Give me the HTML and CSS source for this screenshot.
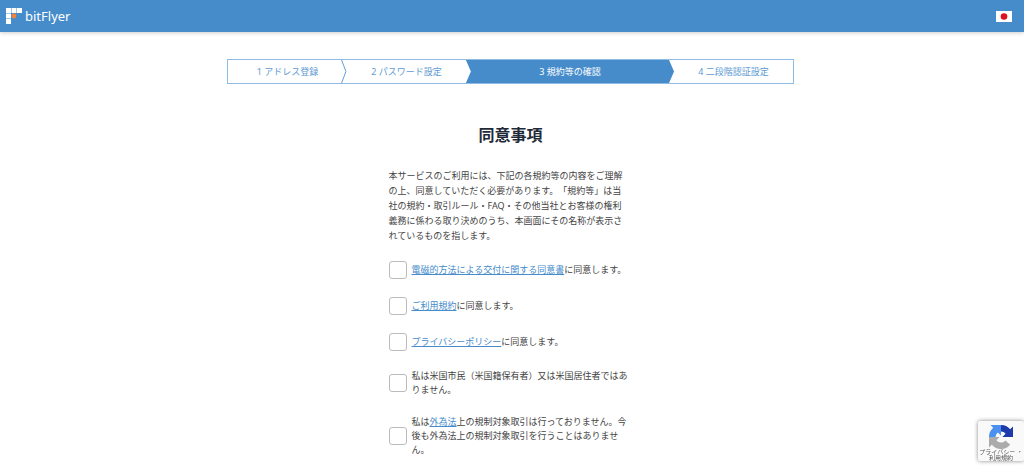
FILE: index.html
```html
<!DOCTYPE html>
<html lang="ja">
<head>
    <meta charset="UTF-8">
    <meta name="viewport" content="width=device-width, initial-scale=1.0">
    <title>同意事項 - bitFlyer</title>
    <link rel="stylesheet" href="styles.css">
</head>
<body>
    <header class="header">
        <a class="logo" href="#">
            <svg class="logo-mark" viewBox="0 0 16 16" aria-hidden="true">
                <g fill="#fff">
                    <rect x="0" y="0" width="5" height="5"/>
                    <rect x="5.5" y="0" width="5" height="5"/>
                    <rect x="11" y="0" width="5" height="5"/>
                    <rect x="0" y="5.5" width="5" height="5"/>
                    <rect x="0" y="11" width="5" height="5"/>
                </g>
                <circle cx="8" cy="8" r="2.4" fill="#f58233"/>
            </svg>
            <span>bitFlyer</span>
        </a>
        <button type="button" class="lang" aria-label="日本語">
            <svg class="flag" viewBox="0 0 16 11" aria-hidden="true">
                <rect width="16" height="11" fill="#fff"/>
                <circle cx="8" cy="5.5" r="3.3" fill="#e0101c"/>
            </svg>
        </button>
    </header>

    <main class="main">
        <ol class="steps">
            <li class="step">1 アドレス登録
                <svg class="chevron" viewBox="0 0 6 24" aria-hidden="true">
                    <path d="M0.5 0L5 12L0.5 24" fill="none" stroke="#5d9ad3"/>
                </svg>
            </li>
            <li class="step">2 パスワード設定</li>
            <li class="step active">3 規約等の確認</li>
            <li class="step">4 二段階認証設定</li>
        </ol>

        <form class="terms">
            <h1>同意事項</h1>
            <p class="lead">本サービスのご利用には、下記の各規約等の内容をご理解の上、同意していただく必要があります。「規約等」は当社の規約・取引ルール・FAQ・その他当社とお客様の権利義務に係わる取り決めのうち、本画面にその名称が表示されているものを指します。</p>
            <div class="checks">
                <div class="check">
                    <input type="checkbox" id="agree1">
                    <label for="agree1"><a href="#">電磁的方法による交付に関する同意書</a>に同意します。</label>
                </div>
                <div class="check">
                    <input type="checkbox" id="agree2">
                    <label for="agree2"><a href="#">ご利用規約</a>に同意します。</label>
                </div>
                <div class="check">
                    <input type="checkbox" id="agree3">
                    <label for="agree3"><a href="#">プライバシーポリシー</a>に同意します。</label>
                </div>
                <div class="check">
                    <input type="checkbox" id="agree4">
                    <label for="agree4">私は米国市民（米国籍保有者）又は米国居住者ではありません。</label>
                </div>
                <div class="check">
                    <input type="checkbox" id="agree5">
                    <label for="agree5">私は<a href="#">外為法</a>上の規制対象取引は行っておりません。今後も外為法上の規制対象取引を行うことはありません。</label>
                </div>
            </div>
        </form>
    </main>

    <aside class="recaptcha">
        <svg class="recaptcha-logo" viewBox="0 0 24 24" aria-hidden="true">
            <path d="M0 12A12 12 0 0 1 4.2 2.8L1.4 0H12V10.6L8.8 7.4A5.6 5.6 0 0 0 6.6 12Z" fill="#4a90f0"/>
            <path d="M12 0A12 12 0 0 1 21.2 4.2L24 1.4V12H13.4L16.6 8.8A5.6 5.6 0 0 0 12 6.6Z" fill="#1c3aa9"/>
            <path d="M12 24A12 12 0 0 1 2.8 19.8L0 22.6V12H10.6L7.4 15.2A5.6 5.6 0 0 0 16.4 15.4L21.2 19.8A12 12 0 0 1 12 24Z" fill="#ababab"/>
        </svg>
        <a href="#">プライバシー ・</a>
        <a href="#">利用規約</a>
    </aside>
</body>
</html>
```

FILE: styles.css
```css
* {
    box-sizing: border-box;
}

body {
    font-family: "Noto Sans", "Noto Sans CJK JP", sans-serif;
    font-size: 9px;
    margin: 0;
    color: #444;
    background: #fff;
    text-spacing-trim: space-all;
}

a {
    color: #468ccb;
}

.header {
    display: flex;
    align-items: center;
    justify-content: space-between;
    height: 32px;
    padding: 0 12px 0 6px;
    background: #468ccb;
    box-shadow: 0 1px 4px rgba(0, 0, 0, 0.2);
}

.logo {
    display: flex;
    align-items: center;
    gap: 3px;
    color: #fff;
    font-size: 13px;
    text-decoration: none;
}

.logo-mark {
    width: 16px;
    height: 16px;
}

.lang {
    display: flex;
    padding: 0;
    border: 0;
    background: none;
    cursor: pointer;
}

.flag {
    width: 16px;
    height: 11px;
}

.main {
    padding: 27px 3px 0 0;
}

.steps {
    display: grid;
    grid-template-columns: 4fr 4fr 7fr 4fr;
    max-width: 567px;
    margin: 0 auto;
    padding: 0;
    border: 1px solid #8ebbe4;
    list-style: none;
}

.step {
    position: relative;
    color: #5d9ad3;
    line-height: 23px;
    text-align: center;
}

.step.active {
    color: #fff;
    background: #468ccb;
    clip-path: polygon(0 0, calc(100% - 5px) 0, 100% 50%, calc(100% - 5px) 100%, 0 100%, 5px 50%);
}

.chevron {
    position: absolute;
    top: 0;
    right: 0;
    width: 6px;
    height: 100%;
}

.terms {
    max-width: 244px;
    margin: 39px auto 0;
}

h1 {
    margin: 0;
    color: #1f2a38;
    font-size: 16px;
    line-height: 24px;
    text-align: center;
}

.lead {
    margin: 21px 0 0;
    padding-right: 6px;
    line-height: 15px;
}

.checks {
    display: flex;
    flex-direction: column;
    gap: 18px;
    margin-top: 18px;
}

.check {
    display: flex;
    align-items: center;
    gap: 5px;
    line-height: 14px;
}

.check input {
    flex: none;
    appearance: none;
    width: 18px;
    height: 18px;
    margin: 0;
    border: 1px solid #bbb;
    border-radius: 3px;
    background: #fff;
}

.check input:checked {
    background: #468ccb;
}

.recaptcha {
    position: fixed;
    right: 0;
    bottom: 5px;
    display: flex;
    flex-direction: column;
    align-items: center;
    width: 46px;
    padding: 4px 0 0;
    background: #f9f9f9;
    border-radius: 2px;
    box-shadow: 0 0 4px #888;
    font-size: 6px;
    line-height: 6px;
    white-space: nowrap;
}

.recaptcha a {
    color: #555;
    text-decoration: none;
}

.recaptcha-logo {
    width: 24px;
    height: 24px;
}
```
